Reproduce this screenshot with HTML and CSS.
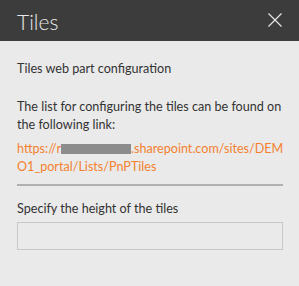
FILE: index.html
```html
<!DOCTYPE html>
<html lang="en">
<head>
    <meta charset="UTF-8">
    <title>Tiles</title>
    <link rel="stylesheet" href="styles.css">
</head>
<body>
    <div class="panel">
        <div class="header">
            <h1>Tiles</h1>
            <button class="close" aria-label="Close">
                <svg width="14" height="14" viewBox="0 0 14 14"><path d="M0.5 0.5L13.5 13.5M13.5 0.5L0.5 13.5" stroke="#e6e6e6" stroke-width="1.2" fill="none"/></svg>
            </button>
        </div>
        <div class="content">
            <p class="intro">Tiles web part configuration</p>
            <p class="desc">The list for configuring the tiles can be found on the following link:</p>
            <a class="link" href="#">https://r<span class="redacted" aria-hidden="true"></span>.sharepoint.com/sites/DEMO1_portal/Lists/PnPTiles</a>
            <hr class="divider">
            <label class="label" for="height">Specify the height of the tiles</label>
            <input class="field" id="height" type="text">
        </div>
    </div>
</body>
</html>
```

FILE: styles.css
```css
*{
    margin: 0;
    padding: 0;
    box-sizing: border-box;
}
body{
    width: 299px;
    height: 286px;
    background-color: #eaeaea;
    font-family: Lato, "Open Sans", sans-serif;
    color: #333333;
    overflow: hidden;
}
.header{
    height: 41px;
    background-color: #3c3c3c;
    display: flex;
    align-items: center;
    justify-content: space-between;
    padding: 0 17px;
}
.header h1{
    font-size: 21px;
    font-weight: 300;
    color: #e8e8e8;
    line-height: 1;
    margin-top: 2px;
}
.close{
    background: none;
    border: none;
    width: 14px;
    height: 14px;
    display: flex;
    margin-top: -1px;
}
.content{
    padding: 19px 16px 0 17px;
    font-size: 12.6px;
    line-height: 18px;
}
.desc{
    margin-top: 20px;
    margin-right: -1px;
}
.link{
    display: block;
    margin-top: 6px;
    margin-right: -1px;
    color: #f4812f;
    text-decoration: none;
    word-break: break-all;
}
.redacted{
    display: inline-block;
    width: 70px;
    height: 10px;
    background-color: #8c8c8c;
    vertical-align: -1px;
}
.divider{
    border: none;
    height: 2px;
    background-color: #b0b0b0;
    margin-top: 8px;
}
.label{
    display: block;
    margin-top: 14px;
}
.field{
    display: block;
    width: 100%;
    height: 28px;
    margin-top: 4px;
    border: 1px solid #c8c8c8;
    background-color: #eaeaea;
}
```
